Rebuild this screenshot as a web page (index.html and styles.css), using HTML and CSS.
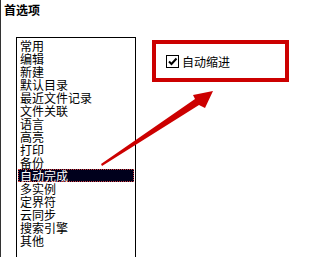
FILE: index.html
```html
<!DOCTYPE html>
<html lang="zh-CN">
<head>
<meta charset="utf-8">
<link rel="stylesheet" href="styles.css">
</head>
<body>
<div class="page">
  <div class="title">首选项</div>
  <div class="content">
    <ul class="listbox">
      <li>常用</li>
      <li>编辑</li>
      <li>新建</li>
      <li>默认目录</li>
      <li>最近文件记录</li>
      <li>文件关联</li>
      <li>语言</li>
      <li>高亮</li>
      <li>打印</li>
      <li>备份</li>
      <li class="selected">自动完成</li>
      <li>多实例</li>
      <li>定界符</li>
      <li>云同步</li>
      <li>搜索引擎</li>
      <li>其他</li>
    </ul>
    <div class="panel">
      <div class="highlight-box">
        <label class="option">
          <span class="check">
            <svg width="13" height="13" viewBox="0 0 13 13">
              <rect x="0.5" y="0.5" width="12" height="12" fill="#fff" stroke="#000"/>
              <path d="M3 6.5 L5.5 9 L10.5 3.5" fill="none" stroke="#000" stroke-width="2"/>
            </svg>
          </span>
          <span>自动缩进</span>
        </label>
      </div>
    </div>
  </div>
  <svg class="arrow" width="332" height="257" viewBox="0 0 332 257">
    <polygon points="101,164 195,99 193,95 213,91 205,108 199,105 102,166" fill="#cc0000"/>
  </svg>
</div>
</body>
</html>
```
FILE: styles.css
```css
html, body {
  margin: 0;
  padding: 0;
  background: #fff;
}
body {
  font-family: "Noto Sans CJK SC", "Liberation Sans", sans-serif;
  font-size: 12px;
  color: #000;
}
.page {
  position: relative;
  height: 257px;
  overflow: hidden;
  border-left: 1px solid #333;
  box-sizing: border-box;
}
.title {
  font-weight: bold;
  font-size: 12px;
  line-height: 13px;
  padding: 3px 0 0 3px;
  height: 13px;
}
.content {
  display: flex;
  align-items: flex-start;
  margin-top: 21px;
}
.listbox {
  list-style: none;
  margin: 0 0 0 15px;
  padding: 1px 0 0 0;
  width: 120px;
  height: 230px;
  box-sizing: border-box;
  border: 1px solid #000;
  border-bottom: none;
}
.listbox li {
  line-height: 13px;
  height: 13px;
  padding-left: 2px;
  margin: 0 1px;
  white-space: nowrap;
}
.listbox li.selected {
  background: #00001c;
  color: #fff;
  outline: 1px dotted #d04040;
  outline-offset: -1px;
}
.panel {
  margin-left: 16px;
  margin-top: 3px;
}
.highlight-box {
  width: 137px;
  height: 42px;
  box-sizing: border-box;
  border: 4px solid #cc0000;
  padding: 11px 0 0 10px;
}
.option {
  display: flex;
  align-items: center;
  gap: 3px;
  line-height: 13px;
}
.check {
  display: flex;
  width: 13px;
  height: 13px;
}
.arrow {
  position: absolute;
  left: -1px;
  top: 0;
  pointer-events: none;
}
```
